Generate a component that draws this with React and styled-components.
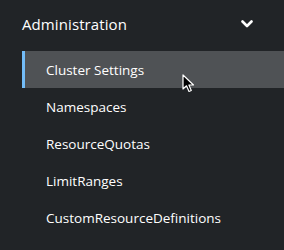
import React from "react";
import styled, { createGlobalStyle } from "styled-components";

const GlobalStyle = createGlobalStyle`
  html, body {
    margin: 0;
    padding: 0;
    background: #212427;
  }
  body {
    font-family: "Open Sans", "Liberation Sans", sans-serif;
    -webkit-font-smoothing: antialiased;
  }
`;

const items = [
  "Cluster Settings",
  "Namespaces",
  "ResourceQuotas",
  "LimitRanges",
  "CustomResourceDefinitions",
];

const App = () => {
  return (
    <>
      <GlobalStyle />
      <Nav>
        <Header>
          <span className="title">Administration</span>
          <svg width="12" height="8" viewBox="0 0 12 8">
            <path
              d="M1.5 1.5 L6 6 L10.5 1.5"
              fill="none"
              stroke="#fff"
              strokeWidth="2.6"
              strokeLinecap="round"
              strokeLinejoin="round"
            />
          </svg>
        </Header>
        <List>
          {items.map((name, index) => (
            <Item key={name} active={index === 0}>
              <span>{name}</span>
              {index === 0 && (
                <Cursor width="13" height="19" viewBox="0 0 13 19">
                  <path
                    d="M1 1 L1 15 L4.5 11.8 L7 17.5 L9.3 16.5 L6.9 11 L11.5 11 Z"
                    fill="#000"
                    stroke="#fff"
                    strokeWidth="1.2"
                    strokeLinejoin="round"
                  />
                </Cursor>
              )}
            </Item>
          ))}
        </List>
      </Nav>
    </>
  );
};

export default App;

const Nav = styled.nav`
  width: 284px;
  height: 250px;
  background: #212427;
  padding-left: 22px;
  box-sizing: border-box;
  overflow: hidden;
`;

const Header = styled.div`
  height: 51px;
  display: flex;
  align-items: center;
  justify-content: space-between;
  padding-right: 31px;
  padding-bottom: 4px;
  box-sizing: border-box;
  color: #fff;

  .title {
    font-size: 15px;
    letter-spacing: 0.1px;
  }
`;

const List = styled.ul`
  list-style: none;
  margin: 0;
  padding: 0;
  display: flex;
  flex-direction: column;
`;

const Item = styled.li`
  position: relative;
  height: 37px;
  display: flex;
  align-items: center;
  padding-left: 21px;
  font-size: 13.5px;
  color: #fff;
  background: ${({ active }) => (active ? "#4f5255" : "transparent")};
  border-left: 3px solid ${({ active }) => (active ? "#73bcf7" : "transparent")};
  box-sizing: border-box;
`;

const Cursor = styled.svg`
  position: absolute;
  left: 157px;
  top: 23px;
`;
